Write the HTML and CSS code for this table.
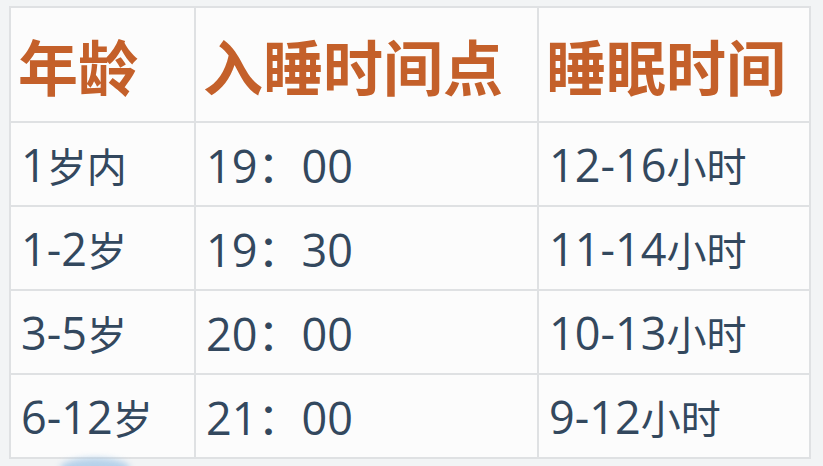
FILE: index.html
```html
<!DOCTYPE html>
<html lang="zh-CN">
<head>
<meta charset="utf-8">
<link rel="stylesheet" href="styles.css">
</head>
<body>
<div class="page">
  <table class="sleep">
    <colgroup>
      <col class="c1"><col class="c2"><col class="c3">
    </colgroup>
    <thead>
      <tr><th>年龄</th><th>入睡时间点</th><th>睡眠时间</th></tr>
    </thead>
    <tbody>
      <tr><td>1<span class="cj">岁内</span></td><td>19<span class="colon">：</span>00</td><td>12-16<span class="cj">小时</span></td></tr>
      <tr><td>1-2<span class="cj">岁</span></td><td>19<span class="colon">：</span>30</td><td>11-14<span class="cj">小时</span></td></tr>
      <tr><td>3-5<span class="cj">岁</span></td><td>20<span class="colon">：</span>00</td><td>10-13<span class="cj">小时</span></td></tr>
      <tr><td>6-12<span class="cj">岁</span></td><td>21<span class="colon">：</span>00</td><td>9-12<span class="cj">小时</span></td></tr>
    </tbody>
  </table>
  <div class="glow"></div>
</div>
</body>
</html>
```
FILE: styles.css
```css
html, body {
  margin: 0;
  padding: 0;
  background: #f2f4f5;
  width: 823px;
  height: 466px;
  overflow: hidden;
}
.page {
  position: relative;
  padding: 6px 0 0 9px;
  height: 466px;
  box-sizing: border-box;
}
.sleep {
  border-collapse: collapse;
  table-layout: fixed;
  width: 800px;
  background: #fcfcfc;
  border: 2px solid #e2e4e6;
}
.c1 { width: 185px; }
.c2 { width: 343px; }
.c3 { width: 272px; }
.sleep th, .sleep td {
  border: 2px solid #dfe1e3;
  text-align: left;
  vertical-align: middle;
  padding: 0 0 0 9px;
  white-space: nowrap;
}
.sleep th {
  height: 113px;
  font-family: "Noto Sans CJK SC", sans-serif;
  font-weight: 700;
  font-size: 60px;
  color: #c4602a;
  padding-left: 7px;
}
.sleep td {
  height: 82px;
  font-family: "Open Sans", "Noto Sans CJK SC", sans-serif;
  font-size: 45px;
  color: #33485e;
  padding-left: 10px;
}
.cj {
  font-family: "Noto Sans CJK SC", sans-serif;
  font-size: 40px;
}
.colon {
  font-family: "Noto Sans CJK SC", sans-serif;
  font-size: 44px;
}
.glow {
  position: absolute;
  left: 60px;
  top: 458px;
  width: 70px;
  height: 20px;
  border-radius: 50%;
  background: #9cc3e6;
  filter: blur(3px);
  opacity: 0.7;
}
```
